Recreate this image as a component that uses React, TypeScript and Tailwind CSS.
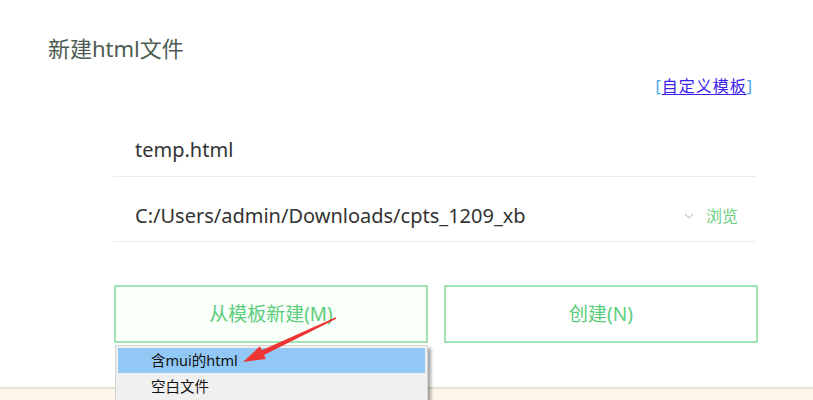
import React from "react";

export default function App() {
  return (
    <div
      className="relative w-[813px] h-[400px] overflow-hidden bg-white"
      style={{ fontFamily: '"Noto Sans", "Noto Sans CJK SC", sans-serif' }}
    >
      <div className="pt-[34px] pl-[48px] text-[22px] leading-[29px] text-[#4d5c52]">
        新建html文件
      </div>
      <div className="flex justify-end pr-[60px] mt-[12px] h-[22px]">
        <span className="text-[16px] leading-[22px] tracking-[1px]">
          <span className="text-[#4aa3e6]">[</span>
          <span className="text-[#3b20f0] underline underline-offset-2">自定义模板</span>
          <span className="text-[#4aa3e6]">]</span>
        </span>
      </div>
      <div className="ml-[113px] w-[643px] mt-[14px]">
        <div className="h-[66px] border-b border-[#ebebeb] pl-[22px] pt-[26px] text-[20px] leading-[26px] text-[#333]">
          temp.html
        </div>
        <div className="h-[65px] border-b border-[#ebebeb] pl-[22px] pt-[26px] flex items-start text-[20px] leading-[26px] text-[#333]">
          <span className="flex-1">C:/Users/admin/Downloads/cpts_1209_xb</span>
          <span className="flex items-center h-[26px] gap-[12px] pr-[18px]">
            <svg width="10" height="6" viewBox="0 0 10 6">
              <path d="M1 1 L5 5 L9 1" fill="none" stroke="#c9c9c9" strokeWidth="1.2" />
            </svg>
            <span className="text-[16px] text-[#6ad07e]">浏览</span>
          </span>
        </div>
      </div>
      <div className="ml-[114px] mt-[43px] flex gap-[16px]">
        <div className="w-[314px] h-[58px] border-2 border-[#a3e4b4] bg-[#f9fff9] flex items-center justify-center text-[19px] text-[#5ccd7c]">
          从模板新建(M)
        </div>
        <div className="w-[314px] h-[58px] border-2 border-[#a3e4b4] bg-white flex items-center justify-center text-[19px] text-[#5ccd7c]">
          创建(N)
        </div>
      </div>
      <div className="mt-[44px] h-[20px] border-t-2 border-[#e6e2d8] bg-[#fcf7ea]" />

      <div className="absolute left-[115px] top-[345px] w-[313px] h-[60px] bg-[#f0f0f0] border border-[#d4d4d4] shadow-[3px_3px_3px_rgba(0,0,0,0.35)] p-[2px] text-[14.5px] text-[#111]">
        <div className="h-[25px] bg-[#91c8f5] pl-[33px] flex items-center leading-none">含mui的html</div>
        <div className="h-[26px] pl-[33px] flex items-center leading-none">空白文件</div>
      </div>

      <svg className="absolute inset-0 pointer-events-none" width="813" height="400">
        <polygon
          points="243,362 259.9,346.3 261.8,350.3 335.7,317.3 336.3,318.7 264,354.9 265.9,358.9"
          fill="#ef3434"
        />
      </svg>
    </div>
  );
}
